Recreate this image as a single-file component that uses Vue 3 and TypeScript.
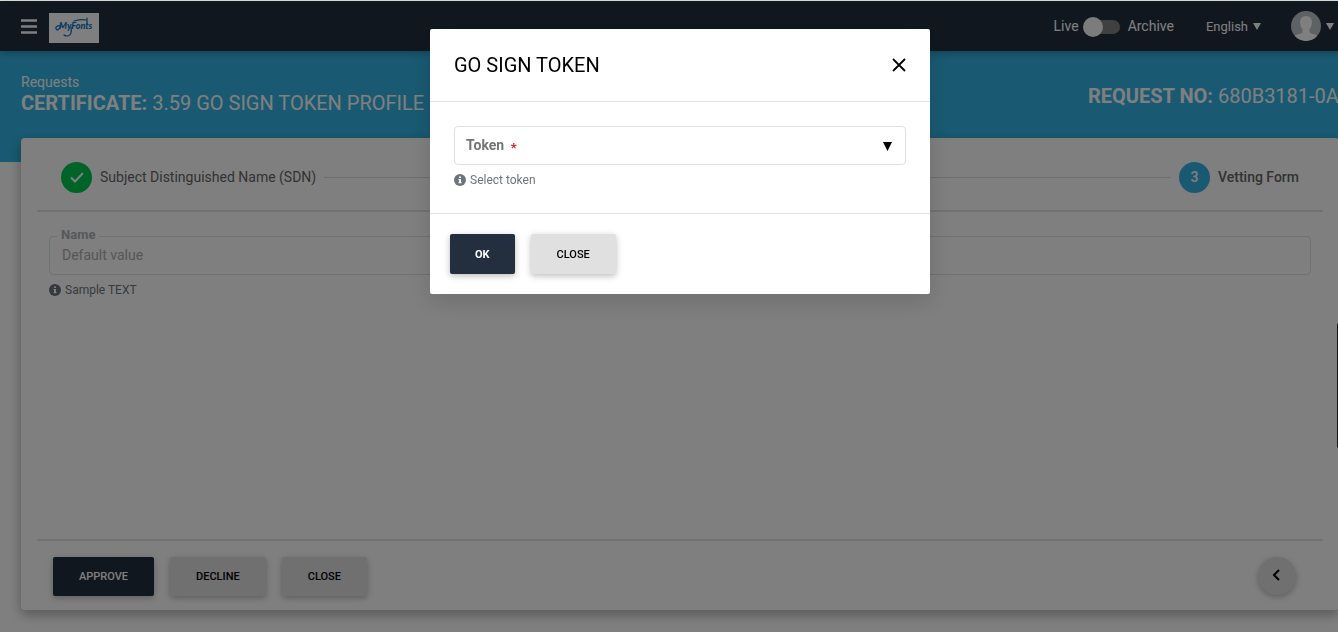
<script setup lang="ts">
import { ref } from 'vue'

const archive = ref(false)
const modalOpen = ref(true)
const token = ref('')
const name = ref('Default value')
</script>

<template>
  <div class="page">
    <header class="topbar">
      <button class="plain" type="button" aria-label="Menu">
        <svg width="16" height="15" viewBox="0 0 16 15"><path d="M0 1.500h16M0 7.500h16M0 13.500h16" stroke="#fff" stroke-width="2.500" /></svg>
      </button>
      <a class="logo" href="#" aria-label="MyFonts">
        <svg width="50" height="30" viewBox="0 0 50 30">
          <text x="10" y="16" class="logo-text">MyFonts</text>
          <path d="M12 13c-3-1-6 1-5 3s4 0 5-3M22 14c1 5 0 9-4 9-2 0-3-1-3-1M25 8c4-1 8-2 12-1M38 5v6" fill="none" stroke="#0a74c4" stroke-width="1.200" stroke-linecap="round" />
        </svg>
      </a>
      <div class="tools">
        <label class="switch">
          <span>Live</span>
          <input v-model="archive" type="checkbox" role="switch" />
          <span>Archive</span>
        </label>
        <button class="plain language" type="button">
          English
          <svg width="8" height="7" viewBox="0 0 8 7"><path d="M0 0h8L4 7z" fill="#fff" /></svg>
        </button>
        <button class="plain account" type="button" aria-label="Account">
          <svg width="30" height="30" viewBox="0 0 30 30">
            <defs><clipPath id="avatar-clip"><circle cx="15" cy="15" r="15" /></clipPath></defs>
            <g clip-path="url(#avatar-clip)">
              <path d="M0 0h30v30H0z" fill="#bdc4c8" />
              <path d="M15 5c-4 0-6 3-6 6 0 1 0 2 .5 3 .3 2 1 3 2 4v3c-1 2-6 2-8.500 4.500V30h24v-4.500C24.500 23 19.500 23 18.500 21v-3c1-1 1.700-2 2-4 .5-1 .5-2 .5-3 0-3-2-6-6-6z" fill="#fff" />
            </g>
          </svg>
          <svg width="8" height="7" viewBox="0 0 8 7"><path d="M0 0h8L4 7z" fill="#fff" /></svg>
        </button>
      </div>
    </header>

    <section class="banner">
      <div>
        <div class="crumb">Requests</div>
        <h1><b>CERTIFICATE:</b> 3.59 GO SIGN TOKEN PROFILE</h1>
      </div>
      <h2><b>REQUEST NO:</b> 680B3181-0A</h2>
    </section>

    <main class="card">
      <div class="steps">
        <span class="dot done">
          <svg width="14" height="11" viewBox="0 0 14 11"><path d="M1 5.500l4 4L13 1" fill="none" stroke="#fff" stroke-width="2" /></svg>
        </span>
        <span>Subject Distinguished Name (SDN)</span>
        <span class="rail"></span>
        <span class="dot current">3</span>
        <span class="active">Vetting Form</span>
      </div>
      <div class="content">
        <div class="field">
          <label class="legend" for="name">Name</label>
          <input id="name" v-model="name" class="control" type="text" disabled />
        </div>
        <p class="hint">
          <svg width="12" height="12" viewBox="0 0 12 12"><circle cx="6" cy="6" r="6" fill="#6c757d" /><path d="M5 2.500h2v1.500H5zM4.500 5H7v3.200h.6v1H4.400v-1H5V6h-.5z" fill="#fff" /></svg>
          Sample TEXT
        </p>
      </div>
      <footer class="actions">
        <button class="btn dark" type="button">APPROVE</button>
        <button class="btn" type="button">DECLINE</button>
        <button class="btn" type="button">CLOSE</button>
        <button class="back" type="button" aria-label="Previous step">
          <svg width="8" height="12" viewBox="0 0 8 12"><path d="M7 1L2 6l5 5" fill="none" stroke="#000" stroke-width="2" /></svg>
        </button>
      </footer>
    </main>
    <div class="side-tab"></div>

    <div v-if="modalOpen" class="backdrop">
      <div class="modal" role="dialog" aria-modal="true" aria-labelledby="modal-title">
        <div class="modal-head">
          <h3 id="modal-title">GO SIGN TOKEN</h3>
          <button class="plain" type="button" aria-label="Dismiss" @click="modalOpen = false">
            <svg width="14" height="14" viewBox="0 0 14 14"><path d="M1 1l12 12M13 1L1 13" stroke="#000" stroke-width="1.800" /></svg>
          </button>
        </div>
        <div class="modal-body">
          <div class="field">
            <label class="inside" for="token">Token <span class="star">*</span></label>
            <select id="token" v-model="token" class="control"></select>
            <svg class="caret" width="9" height="9" viewBox="0 0 9 9"><path d="M0 0h9L4.500 9z" fill="#000" /></svg>
          </div>
          <p class="hint">
            <svg width="12" height="12" viewBox="0 0 12 12"><circle cx="6" cy="6" r="6" fill="#6c757d" /><path d="M5 2.500h2v1.500H5zM4.500 5H7v3.200h.6v1H4.400v-1H5V6h-.5z" fill="#fff" /></svg>
            Select token
          </p>
        </div>
        <div class="modal-foot">
          <button class="btn dark heavy" type="button">OK</button>
          <button class="btn" type="button" @click="modalOpen = false">CLOSE</button>
        </div>
      </div>
    </div>
  </div>
</template>

<style>
body {
  overflow: hidden;
  background: #fff;
}
</style>

<style scoped>
.page {
  box-sizing: border-box;
  position: relative;
  width: calc(100% + 22px);
  min-height: 100vh;
  border-top: 1px solid #dfece4;
  font-family: Roboto, "Liberation Sans", sans-serif;
  font-size: 14px;
  line-height: 20px;
  color: #212529;
}
h1, h2, h3, p {
  margin: 0;
  font-weight: 400;
}
h1, h2, h3 {
  font-size: 20px;
  line-height: 24px;
  white-space: nowrap;
}
svg {
  display: block;
  flex: none;
}
button {
  font-family: inherit;
  cursor: pointer;
}
.plain {
  display: flex;
  align-items: center;
  padding: 0;
  border: 0;
  background: none;
  color: inherit;
}
.topbar {
  position: relative;
  display: flex;
  align-items: center;
  height: 50px;
  padding: 0 26px 0 21px;
  background: #232f3e;
  color: #fff;
  box-shadow: 0 2px 5px rgba(0, 0, 0, 0.16), 0 2px 10px rgba(0, 0, 0, 0.12);
}
.logo {
  margin: 4px 0 0 12px;
  background: #fff;
}
.logo-text {
  font: italic 900 9px Lato, sans-serif;
  fill: #0a74c4;
}
.tools {
  display: flex;
  align-items: center;
  margin-left: auto;
}
.switch {
  display: flex;
  align-items: center;
}
.switch input {
  appearance: none;
  position: relative;
  width: 29px;
  height: 14px;
  margin: 2px 8px 0 12px;
  border-radius: 7px;
  background: #818181;
}
.switch input::before {
  content: "";
  position: absolute;
  left: -8px;
  top: -3px;
  width: 20px;
  height: 20px;
  border-radius: 50%;
  background: #f8f8f8;
}
.switch input:checked::before {
  left: 13px;
}
.language {
  gap: 5px;
  margin: 0 30px 0 32px;
  font-size: 13px;
}
.account {
  gap: 5px;
}
.banner {
  display: flex;
  justify-content: space-between;
  box-sizing: border-box;
  height: 111px;
  padding: 22px 0 0 21px;
  background: #33b5e5;
  color: #fff;
}
.banner h2 {
  width: 272px;
  padding-top: 11px;
}
.crumb {
  line-height: 18px;
}
.card {
  position: relative;
  box-sizing: border-box;
  margin: -24px 21px 0;
  padding: 0 16px;
  border-radius: 4px;
  background: #fff;
  box-shadow: 0 5px 11px rgba(0, 0, 0, 0.18), 0 4px 15px rgba(0, 0, 0, 0.15);
}
.steps {
  display: flex;
  align-items: center;
  gap: 8px;
  box-sizing: border-box;
  height: 72px;
  padding: 6px 24px 0;
  color: #666;
}
.active {
  font-weight: 500;
}
.dot {
  display: flex;
  align-items: center;
  justify-content: center;
  width: 31px;
  height: 31px;
  border-radius: 50%;
  color: #fff;
  font-weight: 500;
}
.done {
  background: #00c851;
}
.current {
  background: #33b5e5;
}
.rail {
  flex: 1;
  height: 1px;
  background: #dcdcdc;
}
.content {
  box-sizing: border-box;
  height: calc(100vh - 301px);
  min-height: 200px;
  padding: 24px 12px 0;
  border-top: 2px solid #dee2e6;
  border-bottom: 2px solid #dee2e6;
}
.field {
  position: relative;
}
.control {
  display: block;
  appearance: none;
  box-sizing: border-box;
  width: 100%;
  height: 39px;
  padding: 0 12px 2px;
  border: 1px solid #dee2e6;
  border-radius: 4px;
  background: #fff;
  color: #adadad;
  font: 14px Roboto, sans-serif;
}
.legend {
  position: absolute;
  left: 8px;
  top: -9px;
  padding: 0 4px;
  background: #fff;
  color: #adb1b5;
  font-size: 13px;
  font-weight: 700;
  line-height: 16px;
}
.inside {
  position: absolute;
  left: 12px;
  top: 9px;
  color: #757575;
  font-weight: 700;
}
.star {
  margin-left: 3px;
  color: #c62828;
  font-size: 13px;
  vertical-align: -2px;
  line-height: 1;
}
.caret {
  position: absolute;
  right: 14px;
  top: 16px;
  pointer-events: none;
}
.hint {
  display: flex;
  align-items: center;
  gap: 4px;
  margin-top: 6px;
  color: #6c757d;
  font-size: 12px;
  line-height: 18px;
}
.actions {
  display: flex;
  gap: 16px;
  padding: 16px 27px 14px 16px;
}
.btn {
  height: 39px;
  padding: 0 26px;
  border: 0;
  border-radius: 2px;
  background: #e0e0e0;
  color: #000;
  font-size: 11px;
  font-weight: 500;
  box-shadow: 0 2px 5px rgba(0, 0, 0, 0.16), 0 2px 10px rgba(0, 0, 0, 0.12);
}
.dark {
  background: #232f3e;
  color: #fff;
}
.heavy {
  padding: 0 25px;
  font-weight: 700;
}
.back {
  display: flex;
  align-items: center;
  justify-content: center;
  width: 38px;
  height: 38px;
  margin-left: auto;
  padding: 0 2px 2px 0;
  border: 0;
  border-radius: 50%;
  background: #e0e0e0;
  box-shadow: 0 2px 5px rgba(0, 0, 0, 0.16), 0 2px 10px rgba(0, 0, 0, 0.12);
}
.side-tab {
  position: absolute;
  top: 322px;
  right: 0;
  width: 23px;
  height: 125px;
  border-radius: 2px 0 0 2px;
  background: #232f3e;
}
.backdrop {
  position: fixed;
  inset: 1px -22px 0 0;
  display: flex;
  align-items: flex-start;
  justify-content: center;
  padding-top: 28px;
  background: rgba(0, 0, 0, 0.5);
}
.modal {
  width: 500px;
  border-radius: 2px;
  background: #fff;
  box-shadow: 0 8px 24px rgba(0, 0, 0, 0.14);
}
.modal-head {
  display: flex;
  align-items: center;
  justify-content: space-between;
  height: 72px;
  padding: 0 24px;
  border-bottom: 1px solid #dee2e6;
  color: #000;
}
.modal-body {
  padding: 24px;
  border-bottom: 1px solid #dee2e6;
}
.modal-foot {
  display: flex;
  gap: 16px;
  padding: 20px;
}
.modal-foot .btn {
  height: 40px;
}
</style>
